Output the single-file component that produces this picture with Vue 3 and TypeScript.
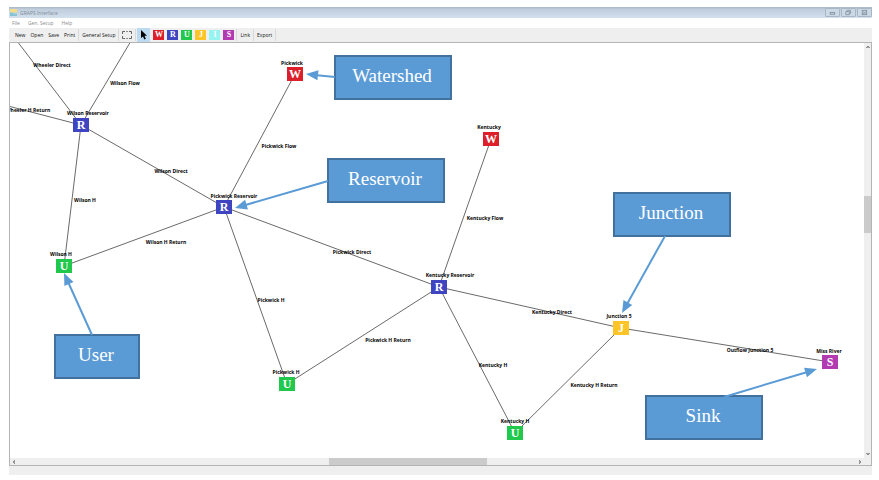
<script setup lang="ts">
type Kind = 'W' | 'R' | 'U' | 'J' | 'I' | 'S'

interface NetNode {
  kind: Kind
  name: string
  x: number
  y: number
  lx: number
  ly: number
}

interface NetLink {
  name: string
  from: [number, number]
  to: [number, number]
  lx: number
  ly: number
}

interface Callout {
  text: string
  x: number
  y: number
  w: number
  from: [number, number]
  to: [number, number]
}

const kinds: { kind: Kind; title: string }[] = [
  { kind: 'W', title: 'Watershed' },
  { kind: 'R', title: 'Reservoir' },
  { kind: 'U', title: 'User' },
  { kind: 'J', title: 'Junction' },
  { kind: 'I', title: 'Interbasin transfer' },
  { kind: 'S', title: 'Sink' },
]

const nodes: NetNode[] = [
  { kind: 'R', name: 'Wilson Reservoir', x: 71, y: 82, lx: 78, ly: 72 },
  { kind: 'W', name: 'Pickwick', x: 285, y: 31, lx: 282, ly: 22 },
  { kind: 'R', name: 'Pickwick Reservoir', x: 214, y: 164, lx: 224, ly: 155 },
  { kind: 'U', name: 'Wilson H', x: 54, y: 223, lx: 51, ly: 213 },
  { kind: 'U', name: 'Pickwick H', x: 277, y: 341, lx: 276, ly: 331 },
  { kind: 'W', name: 'Kentucky', x: 481, y: 96, lx: 479, ly: 86 },
  { kind: 'R', name: 'Kentucky Reservoir', x: 429, y: 244, lx: 440, ly: 234 },
  { kind: 'J', name: 'Junction 5', x: 611, y: 285, lx: 609, ly: 275 },
  { kind: 'U', name: 'Kentucky H', x: 505, y: 390, lx: 505, ly: 380 },
  { kind: 'S', name: 'Miss River', x: 820, y: 319, lx: 819, ly: 310 },
]

const links: NetLink[] = [
  { name: 'Wheeler Direct', from: [7, -2], to: [71, 82], lx: 42, ly: 24 },
  { name: 'Wilson Flow', from: [121, -2], to: [71, 82], lx: 115, ly: 42 },
  { name: 'Wheeler H Return', from: [-2, 63], to: [71, 82], lx: 18, ly: 69 },
  { name: 'Wilson Direct', from: [71, 82], to: [214, 164], lx: 161, ly: 130 },
  { name: 'Wilson H', from: [71, 82], to: [54, 223], lx: 75, ly: 159 },
  { name: 'Wilson H Return', from: [54, 223], to: [214, 164], lx: 156, ly: 201 },
  { name: 'Pickwick Flow', from: [285, 31], to: [214, 164], lx: 269, ly: 105 },
  { name: 'Pickwick Direct', from: [214, 164], to: [429, 244], lx: 342, ly: 211 },
  { name: 'Pickwick H', from: [214, 164], to: [277, 341], lx: 261, ly: 259 },
  { name: 'Pickwick H Return', from: [277, 341], to: [429, 244], lx: 378, ly: 299 },
  { name: 'Kentucky Flow', from: [481, 96], to: [429, 244], lx: 475, ly: 177 },
  { name: 'Kentucky Direct', from: [429, 244], to: [611, 285], lx: 542, ly: 271 },
  { name: 'Kentucky H', from: [429, 244], to: [505, 390], lx: 483, ly: 324 },
  { name: 'Kentucky H Return', from: [505, 390], to: [611, 285], lx: 584, ly: 344 },
  { name: 'Outflow Junction 5', from: [611, 285], to: [820, 319], lx: 740, ly: 309 },
]

const callouts: Callout[] = [
  { text: 'Watershed', x: 324, y: 12, w: 118, from: [325, 34], to: [296, 31] },
  { text: 'Reservoir', x: 317, y: 115, w: 118, from: [318, 138], to: [225, 165] },
  { text: 'Junction', x: 603, y: 149, w: 118, from: [655, 193], to: [612, 270] },
  { text: 'Sink', x: 635, y: 352, w: 118, from: [714, 354], to: [807, 326] },
  { text: 'User', x: 44, y: 291, w: 86, from: [82, 292], to: [54, 230] },
]

const HEAD = 12
const HALF = 5

function arrow(c: Callout) {
  const [x1, y1] = c.from
  const [x2, y2] = c.to
  const len = Math.hypot(x2 - x1, y2 - y1)
  const ux = (x2 - x1) / len
  const uy = (y2 - y1) / len
  const bx = x2 - ux * HEAD
  const by = y2 - uy * HEAD
  return {
    shaft: `M${x1} ${y1}L${bx + ux} ${by + uy}`,
    head: `M${x2} ${y2}L${bx - uy * HALF} ${by + ux * HALF}L${bx + uy * HALF} ${by - ux * HALF}Z`,
  }
}

const hScroll = { before: 311, size: 159, after: 369 }
const vScroll = { before: 145, size: 37, after: 217 }
const fr = (s: { before: number; size: number; after: number }) =>
  `${s.before}fr ${s.size}fr ${s.after}fr`
</script>

<template>
  <main class="window">
    <header class="title-bar">
      <svg class="app-icon" viewBox="0 0 8 8" aria-hidden="true">
        <rect width="8" height="8" fill="#a9d3dc" />
        <rect width="8" height="4" fill="#f2dc8c" />
        <path d="M0 5Q2 3 4 5T8 5V8H0Z" fill="#86c3d6" />
      </svg>
      <h1>GRAPS Interface</h1>
      <div class="window-buttons">
        <button type="button" aria-label="Minimize">
          <svg viewBox="0 0 12 8"><rect x="4" y="4" width="5" height="2" /></svg>
        </button>
        <button type="button" aria-label="Restore">
          <svg viewBox="0 0 12 8"><path d="M5 3V1.500H9V5H7.500M3.500 3H7.500V6.500H3.500Z" /></svg>
        </button>
        <button type="button" aria-label="Close">
          <svg viewBox="0 0 12 8"><rect x="4" y="1.500" width="5" height="5" /><path d="M5 3L8 5.500M8 3L5 5.500" /></svg>
        </button>
      </div>
    </header>

    <nav class="menu-bar">
      <button type="button">File</button>
      <button type="button">Gen. Setup</button>
      <button type="button">Help</button>
    </nav>

    <div class="toolbar" role="toolbar">
      <div class="group files">
        <button type="button">New</button>
        <button type="button">Open</button>
        <button type="button">Save</button>
        <button type="button">Print</button>
      </div>
      <div class="group"><button type="button">General Setup</button></div>
      <div class="group">
        <button type="button" class="extent" aria-label="Full extent">
          <svg viewBox="0 0 10 8"><path d="M3 .5H.5V3M.5 5V7.500H3M7 .5H9.500V3M9.500 5V7.500H7M4.300 .5H5.700M4.300 7.500H5.700" /></svg>
        </button>
      </div>
      <div class="group tools">
        <button type="button" class="pointer" aria-label="Select">
          <svg viewBox="0 0 7 10"><path d="M1 0V8L3 6.400L4.300 9.500L5.800 8.800L4.500 5.800H7Z" /></svg>
        </button>
        <button
          v-for="k in kinds"
          :key="k.kind"
          type="button"
          class="tool"
          :class="k.kind"
          :aria-label="k.title"
        >{{ k.kind }}</button>
      </div>
      <div class="group"><button type="button">Link</button></div>
      <div class="group"><button type="button">Export</button></div>
    </div>

    <section class="workspace">
      <div class="canvas">
        <svg class="network">
          <path
            v-for="l in links"
            :key="l.name"
            class="link"
            :d="`M${l.from[0]} ${l.from[1]}L${l.to[0]} ${l.to[1]}`"
          />
          <text v-for="l in links" :key="l.name" class="label" :x="l.lx" :y="l.ly">{{ l.name }}</text>
          <g v-for="n in nodes" :key="n.name">
            <rect class="node" :class="n.kind" :x="n.x - 8" :y="n.y - 7" width="16" height="14" />
            <text class="letter" :x="n.x" :y="n.y + 4">{{ n.kind }}</text>
            <text class="label" :x="n.lx" :y="n.ly">{{ n.name }}</text>
          </g>
          <g v-for="c in callouts" :key="c.text">
            <rect class="callout" :x="c.x + 1" :y="c.y + 1" :width="c.w - 2" height="43" />
            <text class="callout-text" :x="c.x + c.w / 2 - 1" :y="c.y + 27">{{ c.text }}</text>
            <path class="shaft" :d="arrow(c).shaft" />
            <path class="head" :d="arrow(c).head" />
          </g>
        </svg>
      </div>
      <div class="scroll vertical">
        <button type="button" aria-label="Scroll up"><svg viewBox="0 0 4 4"><path d="M.5 3L2 1.300L3.500 3" /></svg></button>
        <div class="track" :style="{ gridTemplateRows: fr(vScroll) }"><div class="thumb"></div></div>
        <button type="button" aria-label="Scroll down"><svg viewBox="0 0 4 4"><path d="M.5 1L2 2.700L3.500 1" /></svg></button>
      </div>
      <div class="scroll horizontal">
        <button type="button" aria-label="Scroll left"><svg viewBox="0 0 4 4"><path d="M3 .5L1.300 2L3 3.500" /></svg></button>
        <div class="track" :style="{ gridTemplateColumns: fr(hScroll) }"><div class="thumb"></div></div>
        <button type="button" aria-label="Scroll right"><svg viewBox="0 0 4 4"><path d="M1 .5L2.700 2L1 3.500" /></svg></button>
      </div>
      <div class="corner"></div>
    </section>

    <footer class="status-bar"></footer>
  </main>
</template>

<style>
body {
  background: #fff;
}
</style>

<style scoped>
.window {
  box-sizing: border-box;
  min-height: 100vh;
  padding: 7px 7px 5px 9px;
  display: flex;
  flex-direction: column;
  font: 5px/8px "Open Sans", "Noto Sans", sans-serif;
  color: #111;
}

button {
  margin: 0;
  padding: 0;
  border: 0;
  background: none;
  font: inherit;
  color: inherit;
}

svg {
  display: block;
}

.title-bar {
  display: flex;
  align-items: center;
  height: 11px;
  background: linear-gradient(#a9b6c4, #bfcddd 20%, #d3e0ed);
  color: #7f8b99;
}

.app-icon {
  width: 7px;
  height: 7px;
  margin: 0 3px 0 1px;
}

h1 {
  margin: 0;
  font-size: 5px;
  font-weight: 400;
}

.window-buttons {
  display: flex;
  gap: 1px;
  margin-left: auto;
}

.window-buttons button {
  box-sizing: border-box;
  width: 15px;
  height: 9px;
  border: 1px solid #a9b7c5;
  border-radius: 1px;
  background: #cbd8e5;
}

.window-buttons svg {
  width: 12px;
  height: 7px;
  fill: none;
  stroke: #8591a0;
  stroke-width: 1;
}

.menu-bar {
  display: flex;
  align-items: center;
  gap: 8px;
  height: 10px;
  padding-left: 3px;
  background: #fff;
  color: #8c8c8c;
}

.toolbar {
  display: flex;
  align-items: center;
  height: 14px;
  background: #efefef;
}

.group {
  display: flex;
  align-items: center;
  height: 12px;
  padding: 0 3px;
  border-right: 1px solid #d9d9d9;
}

.files {
  gap: 5px;
  padding-left: 6px;
}

.extent svg {
  width: 10px;
  height: 8px;
  fill: none;
  stroke: #666;
}

.tools {
  gap: 3px;
  padding: 0 2px 0 1px;
}

.pointer {
  display: flex;
  align-items: center;
  justify-content: center;
  width: 13px;
  height: 14px;
  background: #bcdaf0;
}

.pointer svg {
  width: 7px;
  height: 10px;
  fill: #000;
}

.tool {
  width: 11px;
  height: 10px;
  font: bold 8px/10px "Liberation Serif", serif;
  text-align: center;
  color: #fff;
}

.tool.W { background: #dc1f2b; }
.tool.R { background: #3f45c0; }
.tool.U { background: #20c84c; }
.tool.J { background: #fdc527; }
.tool.I { background: #95f3f0; }
.tool.S { background: #b33bb2; }

.workspace {
  flex: 1;
  display: grid;
  grid-template: minmax(0, 1fr) 7px / minmax(0, 1fr) 7px;
  border: 1px solid #b4b4b4;
}

.canvas {
  overflow: hidden;
  background: #fff;
}

.network {
  width: 100%;
  height: 100%;
  min-height: 400px;
}

.link {
  fill: none;
  stroke: #6a6a6a;
  stroke-width: 1;
}

.label {
  font: bold 5px "Open Sans", "Noto Sans", sans-serif;
  text-anchor: middle;
  fill: #000;
}

.letter {
  font: bold 12px "Liberation Serif", serif;
  text-anchor: middle;
  fill: #fff;
}

.node.W { fill: #dc1f2b; }
.node.R { fill: #3f45c0; }
.node.U { fill: #20c84c; }
.node.J { fill: #fdc527; }
.node.S { fill: #b33bb2; }

.callout {
  fill: #5b9bd5;
  stroke: #41719c;
  stroke-width: 2;
}

.callout-text {
  font: 19px "Liberation Serif", serif;
  text-anchor: middle;
  fill: #fff;
}

.shaft {
  fill: none;
  stroke: #5b9bd5;
  stroke-width: 2;
}

.head {
  fill: #5b9bd5;
}

.scroll {
  display: flex;
  background: #efefef;
}

.vertical {
  flex-direction: column;
}

.scroll button {
  display: flex;
  align-items: center;
  justify-content: center;
  width: 7px;
  height: 8px;
}

.horizontal button {
  width: 8px;
  height: 7px;
}

.scroll svg {
  width: 4px;
  height: 4px;
  fill: none;
  stroke: #444;
}

.track {
  flex: 1;
  display: grid;
}

.thumb {
  background: #cbcbcb;
}

.vertical .thumb {
  grid-row: 2;
}

.horizontal .thumb {
  grid-column: 2;
}

.corner {
  background: #efefef;
}

.status-bar {
  height: 9px;
  background: #efefef;
}
</style>
